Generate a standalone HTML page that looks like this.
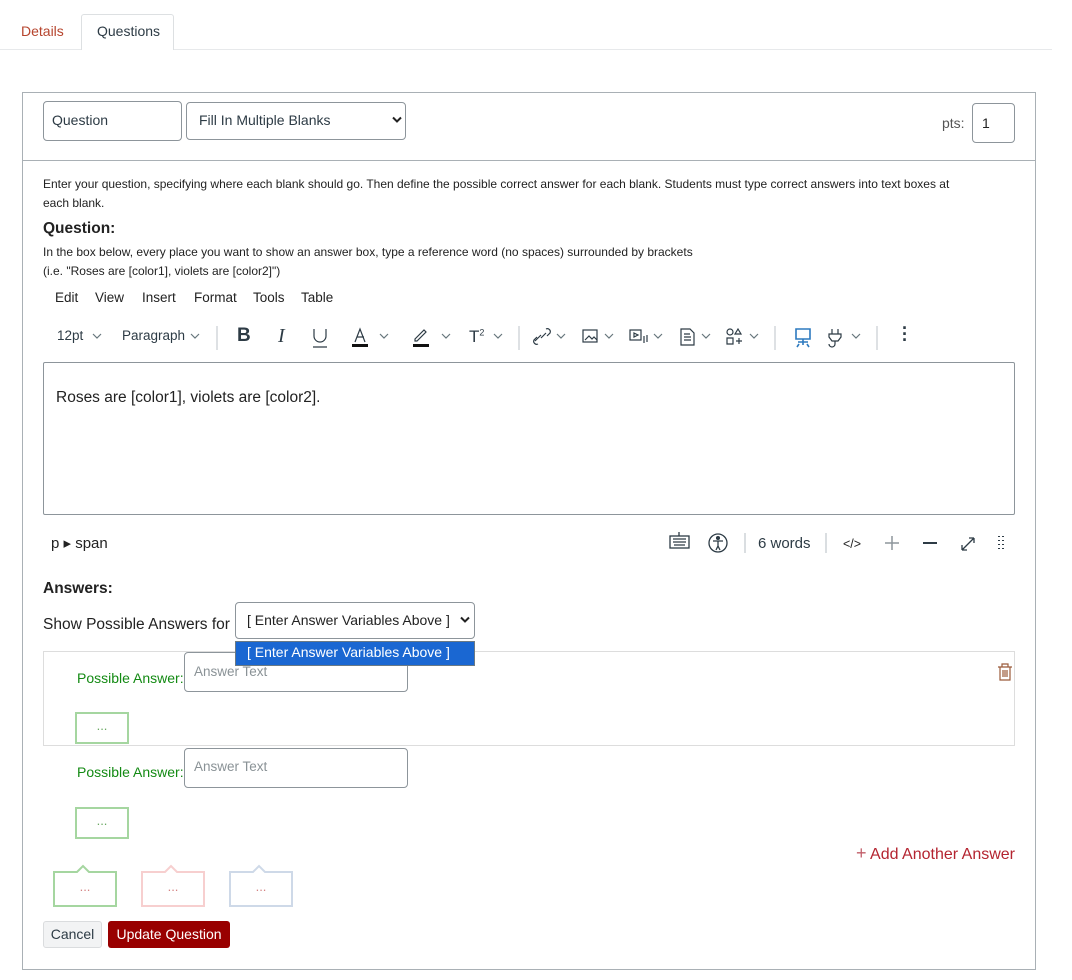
<!DOCTYPE html>
<html><head><meta charset="utf-8"><style>
*{box-sizing:border-box;margin:0;padding:0}
body{width:1072px;height:980px;background:#fff;font-family:"Liberation Sans",sans-serif;color:#2d3b45;position:relative;overflow:hidden}
.a{position:absolute;white-space:nowrap}
.inp{position:absolute;border:1px solid #8d959b;border-radius:4px;background:#fff}
svg{position:absolute}
</style></head><body>
<div class="a" style="left:0;top:49px;width:1052px;border-top:1px solid #e7e9eb"></div>
<div class="a" style="left:81px;top:14px;width:93px;height:36px;border:1px solid #dde0e2;border-bottom:none;background:#fff;border-radius:3px 3px 0 0"></div>
<div class="a" style="left:21px;top:23px;font-size:14px;color:#b6442d">Details</div>
<div class="a" style="left:97px;top:23px;font-size:14px;color:#2d3b45">Questions</div>
<div class="a" style="left:22px;top:92px;width:1014px;height:878px;border:1px solid #a9b0b5"></div>
<div class="a" style="left:23px;top:160px;width:1012px;border-top:1px solid #a9b0b5"></div>
<div class="inp" style="left:43px;top:101px;width:139px;height:40px"></div>
<div class="a" style="left:52px;top:112px;font-size:14px">Question</div>
<div class="inp" style="left:186px;top:102px;width:220px;height:38px"></div>
<div class="a" style="left:199px;top:112px;font-size:14px">Fill In Multiple Blanks</div>
<svg style="left:392px;top:116px" width="10" height="8"><path d="M1 1.5L5 5.5L9 1.5" stroke="#222" stroke-width="2" fill="none"/></svg>
<div class="a" style="left:942px;top:115px;font-size:14px;color:#555">pts:</div>
<div class="inp" style="left:972px;top:103px;width:43px;height:40px"></div>
<div class="a" style="left:982px;top:115px;font-size:14px;color:#222">1</div>
<div class="a" style="left:43px;top:175px;font-size:12px;color:#222;line-height:19px">Enter your question, specifying where each blank should go. Then define the possible correct answer for each blank. Students must type correct answers into text boxes at<br>each blank.</div>
<div class="a" style="left:43px;top:220px;font-size:15.5px;font-weight:bold;color:#222">Question:</div>
<div class="a" style="left:43px;top:243px;font-size:12px;color:#222;line-height:19px">In the box below, every place you want to show an answer box, type a reference word (no spaces) surrounded by brackets<br>(i.e. "Roses are [color1], violets are [color2]")</div>
<div class="a" style="left:55px;top:290px;font-size:13.5px;color:#222">Edit</div>
<div class="a" style="left:95px;top:290px;font-size:13.5px;color:#222">View</div>
<div class="a" style="left:142px;top:290px;font-size:13.5px;color:#222">Insert</div>
<div class="a" style="left:194px;top:290px;font-size:13.5px;color:#222">Format</div>
<div class="a" style="left:253px;top:290px;font-size:13.5px;color:#222">Tools</div>
<div class="a" style="left:301px;top:290px;font-size:13.5px;color:#222">Table</div>
<div class="a" style="left:57px;top:328px;font-size:13.5px">12pt</div>
<div class="a" style="left:122px;top:328px;font-size:13.5px">Paragraph</div>
<svg style="left:0;top:320px" width="1072" height="34" fill="none" stroke="#68777d" stroke-width="1.2">
<path d="M93 14l4 4 4-4M191 14l4 4 4-4M380 14l4 4 4-4M442 14l4 4 4-4M494 14l4 4 4-4M557 14l4 4 4-4M605 14l4 4 4-4M654 14l4 4 4-4M702 14l4 4 4-4M750 14l4 4 4-4M852 14l4 4 4-4"/>
<path d="M217 6v24M519 6v24M775 6v24M877 6v24" stroke="#c7cdd1"/>
<path d="M355 22l5-13 5 13M357 17h7" stroke="#2d3b45"/><rect x="352" y="24" width="16" height="3" fill="#111" stroke="none"/>
<path d="M415 19l9-9 2 2-9 9h-2z" stroke="#2d3b45"/><rect x="413" y="24" width="16" height="3" fill="#111" stroke="none"/>
<path d="M314 9v7a6 6 0 0 0 12 0v-7M313 27h14" stroke="#2d3b45"/>
<path d="M535 21l6-6M538 24a3 3 0 0 1-4-4l3-3M546 9a3 3 0 0 1 4 4l-3 3M541 18l5-5" stroke="#2d3b45"/>
<rect x="583" y="10" width="14" height="12" stroke="#2d3b45"/><path d="M585 20l4-4 3 3 2-2 3 3" stroke="#2d3b45"/>
<rect x="630" y="10" width="11" height="10" stroke="#2d3b45"/><path d="M634 13l4 2-4 2z M644 16v7M647 15v7" stroke="#2d3b45"/>
<path d="M681 9h9l4 4v12h-13z M684 14h6M684 17h7M684 20h7" stroke="#2d3b45"/>
<circle cx="730" cy="12" r="3" stroke="#2d3b45"/><path d="M738 9l3 5h-6zM727 18h6v6h-6zM739 18v6M736 21h6" stroke="#2d3b45"/>
<path d="M796 9h14v10h-14zM798 22h10M803 19v6M799 24l-2 3M807 24l2 3" stroke="#2d7abf" stroke-width="1.6"/>
<path d="M832 9v5M838 9v5M829 14h12v3l-3 4h-6l-3-4zM835 21v3a3 3 0 0 1-6 0" stroke="#2d3b45"/>
</svg>
<div class="a" style="left:237px;top:325px;font-size:19px;font-weight:bold;color:#2d3b45">B</div>
<div class="a" style="left:278px;top:325px;font-size:20px;font-style:italic;font-family:'Liberation Serif',serif;color:#2d3b45">I</div>
<div class="a" style="left:469px;top:327px;font-size:17px;color:#2d3b45">T<sup style="font-size:9px">2</sup></div>
<div class="a" style="left:902px;top:325px;font-size:18px;font-weight:bold;color:#2d3b45;line-height:6px;width:4px;text-align:center">·<br>·<br>·</div>
<div class="a" style="left:43px;top:362px;width:972px;height:153px;border:1px solid #8d959b;border-radius:2px"></div>
<div class="a" style="left:56px;top:389px;font-size:15.5px;color:#222">Roses are [color1], violets are [color2].</div>
<div class="a" style="left:51px;top:534px;font-size:15px;color:#222">p ▸ span</div>
<div class="a" style="left:758px;top:535px;font-size:15px;color:#2d3b45">6 words</div>
<div class="a" style="left:843px;top:537px;font-size:12.5px;color:#222">&lt;/&gt;</div>
<svg style="left:660px;top:528px" width="360" height="30" fill="none" stroke="#2d3b45" stroke-width="1.3">
<rect x="10" y="8" width="19" height="12"/><path d="M13 11h13M13 14h13M14 17h11M19 4v4"/>
<circle cx="58" cy="15" r="9"/><circle cx="58" cy="10" r="1.4" fill="#2d3b45"/><path d="M53 13h10M58 13v5l-2 4M58 18l2 4"/>
<path d="M85 5v20M166 5v20" stroke="#c7cdd1"/>
<path d="M232 8v14M225 15h14" stroke="#8d959b" stroke-width="1.5"/>
<path d="M263 15h14" stroke-width="2"/>
<path d="M302 22l12-12M302 22v-5M302 22h5M314 10h-5M314 10v5"/>
<path d="M339 8v1M343 8v1M339 12v1M343 12v1M339 16v1M343 16v1M339 20v1M343 20v1" stroke-width="2"/>
</svg>
<div class="a" style="left:43px;top:580px;font-size:15.5px;font-weight:bold;color:#222">Answers:</div>
<div class="a" style="left:43px;top:616px;font-size:15.5px;color:#222">Show Possible Answers for</div>
<div class="a" style="left:43px;top:651px;width:972px;height:95px;border:1px solid #ddd"></div>
<div class="inp" style="left:235px;top:602px;width:240px;height:37px"></div>
<div class="a" style="left:247px;top:612px;font-size:14px;color:#222">[ Enter Answer Variables Above ]</div>
<svg style="left:460px;top:616px" width="10" height="8"><path d="M1 1.5L5 5.5L9 1.5" stroke="#222" stroke-width="2" fill="none"/></svg>
<div class="a" style="left:235px;top:641px;width:240px;height:25px;background:#1a67d2;border:1px solid #6b7a84;z-index:2"></div>
<div class="a" style="left:247px;top:644px;font-size:14px;color:#fff;z-index:3">[ Enter Answer Variables Above ]</div>
<div class="a" style="left:77px;top:670px;font-size:14px;color:#138a13">Possible Answer:</div>
<div class="inp" style="left:184px;top:652px;width:224px;height:40px"></div>
<div class="a" style="left:194px;top:664px;font-size:13.5px;color:#8a9296">Answer Text</div>
<div class="a" style="left:75px;top:712px;width:54px;height:32px;border:2px solid #a5d6a0;text-align:center;font-size:13px;color:#6aa862;line-height:24px">...</div>
<svg style="left:996px;top:662px" width="18" height="20" fill="none" stroke="#9b5b3a" stroke-width="1.2"><path d="M2 5h14M6 5V2h6v3M4 5v13h10V5M7 8v7M9 8v7M11 8v7"/></svg>
<div class="a" style="left:77px;top:764px;font-size:14px;color:#138a13">Possible Answer:</div>
<div class="inp" style="left:184px;top:748px;width:224px;height:40px"></div>
<div class="a" style="left:194px;top:759px;font-size:13.5px;color:#8a9296">Answer Text</div>
<div class="a" style="left:75px;top:807px;width:54px;height:32px;border:2px solid #a5d6a0;text-align:center;font-size:13px;color:#6aa862;line-height:24px">...</div>
<div class="a" style="right:57px;top:843px;font-size:16px;color:#b42430"><span style="color:#c25f6a;font-size:18px">+</span> Add Another Answer</div>
<svg style="left:50px;top:860px" width="250" height="52" fill="#fff" stroke-width="2">
<path d="M4 12h23l6-6 6 6h27v34h-62z" stroke="#a5d6a0"/>
<path d="M92 12h23l6-6 6 6h27v34h-62z" stroke="#f7cfcf"/>
<path d="M180 12h23l6-6 6 6h27v34h-62z" stroke="#ced9e8"/>
</svg>
<div class="a" style="left:53px;top:879px;width:64px;text-align:center;font-size:13px;color:#d48383">...</div>
<div class="a" style="left:141px;top:879px;width:64px;text-align:center;font-size:13px;color:#d48383">...</div>
<div class="a" style="left:229px;top:879px;width:64px;text-align:center;font-size:13px;color:#d48383">...</div>
<div class="a" style="left:43px;top:921px;width:59px;height:27px;background:#f2f3f4;border:1px solid #dadcde;border-radius:3px;font-size:14px;color:#2d3b45;text-align:center;line-height:25px">Cancel</div>
<div class="a" style="left:108px;top:921px;width:122px;height:27px;background:#990000;border-radius:3px;font-size:14px;color:#fff;text-align:center;line-height:27px">Update Question</div>
</body></html>
